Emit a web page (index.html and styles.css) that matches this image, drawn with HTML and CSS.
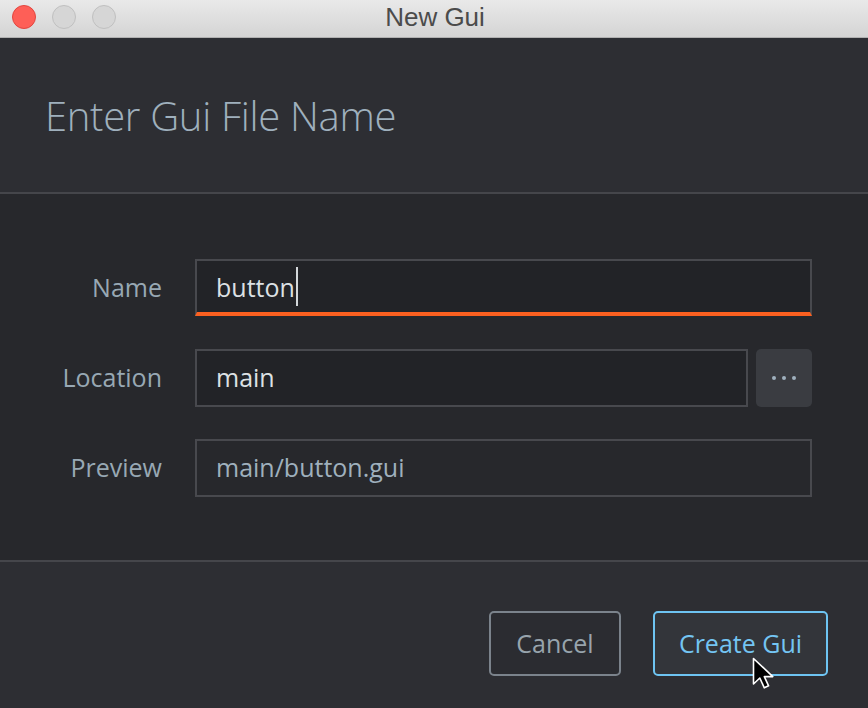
FILE: index.html
```html
<!DOCTYPE html>
<html>
<head>
<meta charset="utf-8">
<title>New Gui</title>
<link rel="stylesheet" href="styles.css">
</head>
<body>
<div class="window">
  <div class="titlebar">
    <div class="lights">
      <span class="light close"></span>
      <span class="light"></span>
      <span class="light"></span>
    </div>
    <div class="title">New Gui</div>
  </div>
  <div class="header">
    <h1 class="heading">Enter Gui File Name</h1>
  </div>
  <div class="form">
    <label class="label">Name</label>
    <div class="field field-active"><span class="value">button</span><span class="caret"></span></div>

    <label class="label">Location</label>
    <div class="loc-row">
      <div class="field field-grow"><span class="value">main</span></div>
      <button class="browse"><span class="dot"></span><span class="dot"></span><span class="dot"></span></button>
    </div>

    <label class="label">Preview</label>
    <div class="field field-preview"><span class="value preview">main/button.gui</span></div>
  </div>
  <div class="footer">
    <button class="btn btn-cancel">Cancel</button>
    <button class="btn btn-primary">Create Gui</button>
  </div>
  <svg class="pointer" width="24" height="33" viewBox="0 0 24 33">
    <polygon points="1.5,1.5 1.5,27 7.8,21 12.3,30.8 16.6,28.8 12.3,19.6 20.8,19.6" fill="#000" stroke="#fff" stroke-width="1.6" stroke-linejoin="round"/>
  </svg>
</div>
</body>
</html>
```
FILE: styles.css
```css
* { box-sizing: border-box; }
html, body {
  margin: 0;
  padding: 0;
  width: 868px;
  height: 708px;
  overflow: hidden;
  background: #2d2e33;
}
.window {
  position: relative;
  width: 868px;
  height: 708px;
  display: flex;
  flex-direction: column;
  font-family: "Open Sans", "Noto Sans", sans-serif;
}
.titlebar {
  position: relative;
  height: 38px;
  flex: none;
  background: linear-gradient(#e9e9e9, #d4d4d4);
  border-bottom: 1px solid #b1b1b1;
  display: flex;
  align-items: center;
  justify-content: center;
}
.lights {
  position: absolute;
  left: 12px;
  top: 5px;
  display: flex;
  gap: 16px;
}
.light {
  width: 24px;
  height: 24px;
  border-radius: 50%;
  background: #d6d6d6;
  border: 1px solid #c0c0c0;
}
.light.close {
  background: #fe5f57;
  border-color: #e2463f;
}
.title {
  font-family: "Liberation Sans", Arial, sans-serif;
  font-size: 26px;
  color: #4b4b4b;
  margin-top: -2px;
  margin-left: 2px;
}
.header {
  height: 156px;
  flex: none;
  display: flex;
  align-items: center;
  padding-left: 45px;
  padding-top: 1px;
  background: #2d2e33;
  border-bottom: 2px solid #45464b;
}
.heading {
  margin: 0;
  font-weight: 300;
  font-size: 40px;
  color: #9fb0bd;
  letter-spacing: -0.3px;
}
.form {
  height: 368px;
  flex: none;
  background: #27282c;
  border-bottom: 2px solid #45464b;
  padding: 65px 56px 0 0;
  display: grid;
  grid-template-columns: 162px 1fr;
  column-gap: 33px;
  row-gap: 32px;
  grid-auto-rows: 58px;
  align-items: center;
}
.label {
  text-align: right;
  font-size: 25px;
  color: #98a8b4;
  padding-bottom: 2px;
}
.field {
  height: 58px;
  border: 2px solid #48494e;
  background: #222327;
  display: flex;
  align-items: center;
  padding-left: 19px;
  padding-bottom: 2px;
}
.field-active {
  height: 57px;
  align-self: start;
  border-bottom: 4px solid #fb6020;
  padding-bottom: 0;
}
.value {
  font-size: 25px;
  color: #dde1e4;
}
.caret {
  width: 2px;
  height: 39px;
  background: #d3d7da;
  margin-left: 1px;
}
.loc-row {
  display: flex;
  gap: 8px;
  height: 58px;
}
.field-grow { flex: 1; }
.browse {
  width: 56px;
  height: 58px;
  border: none;
  border-radius: 5px;
  background: #3a3c41;
  padding: 0;
  display: flex;
  align-items: center;
  justify-content: center;
  gap: 6px;
}
.dot {
  width: 4px;
  height: 4px;
  border-radius: 50%;
  background: #9fb0bd;
}
.field-preview { background: #27282c; }
.value.preview { color: #9fb0bd; }
.footer {
  flex: 1;
  background: #2d2e33;
  display: flex;
  justify-content: flex-end;
  align-items: flex-start;
  gap: 32px;
  padding: 49px 40px 0 0;
}
.btn {
  height: 65px;
  border-radius: 5px;
  font-family: "Open Sans", "Noto Sans", sans-serif;
  font-size: 25px;
  padding: 0 0 2px;
  display: flex;
  align-items: center;
  justify-content: center;
}
.btn-cancel {
  width: 132px;
  background: #2b2c31;
  border: 2px solid #7b838c;
  color: #98a4ad;
}
.btn-primary {
  width: 175px;
  background: #33353a;
  border: 2px solid #6ec4f2;
  color: #74c5f3;
}
.pointer {
  position: absolute;
  left: 752px;
  top: 657px;
}
```
